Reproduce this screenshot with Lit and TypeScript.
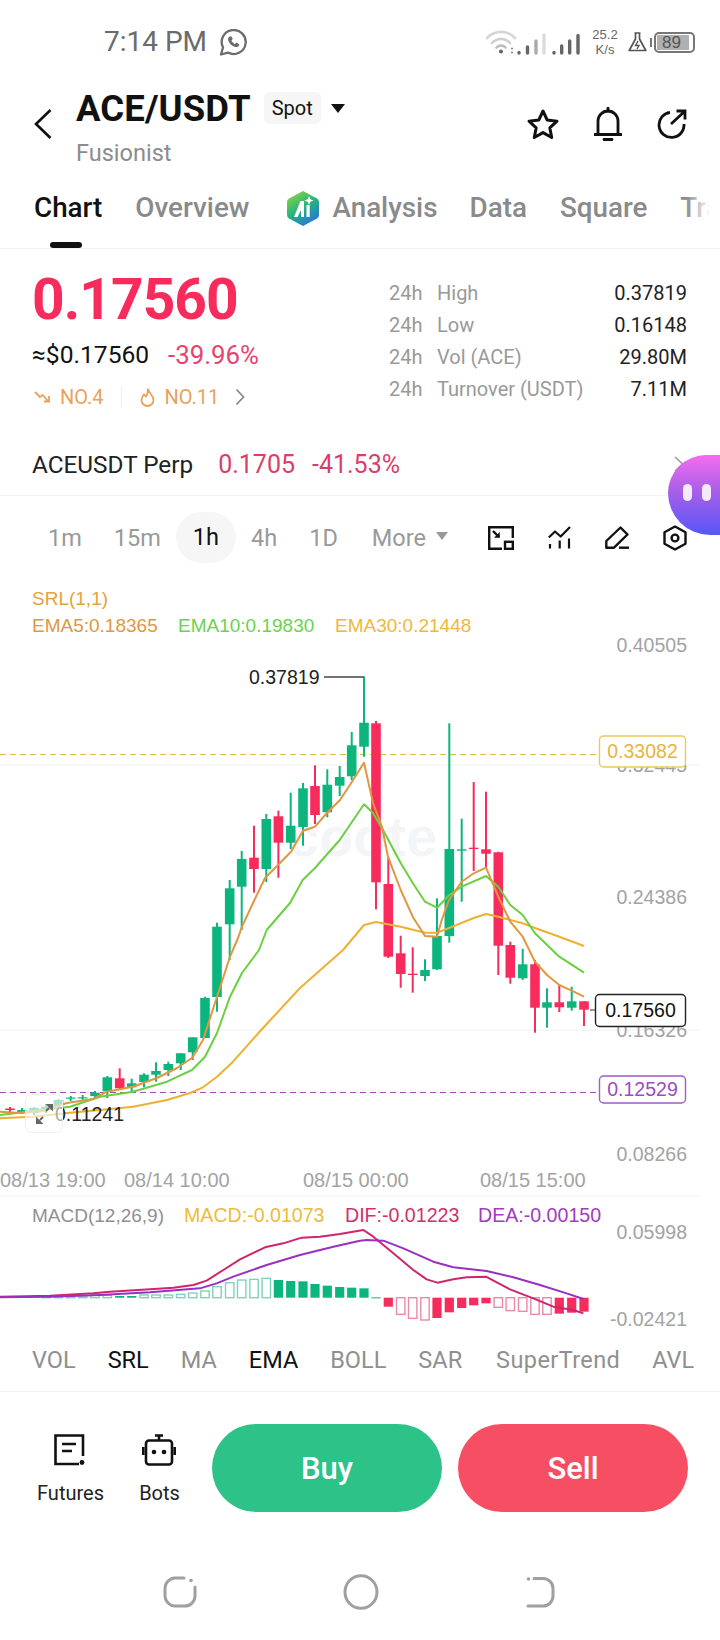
import { LitElement, html, svg, css } from 'lit';
import { customElement } from 'lit/decorators.js';

type Candle = [x: number, high: number, low: number, top: number, bottom: number, up: boolean];

const UP = '#0db57e';
const DOWN = '#f72b5c';

const CANDLES: Candle[] = [
  [10, 1107, 1112, 1108.5, 1110, false],
  [22, 1108, 1114, 1110, 1112, true],
  [34, 1107, 1115, 1108, 1113, true],
  [46, 1104, 1113, 1106.7, 1110, true],
  [58.5, 1099, 1108, 1100, 1106, true],
  [70.7, 1096, 1101, 1097.5, 1098.7, true],
  [82.7, 1095, 1100, 1097.3, 1098.5, true],
  [95, 1091, 1098, 1092.7, 1096, true],
  [107.3, 1076, 1098, 1077.3, 1091.3, true],
  [119.7, 1068.3, 1090, 1078.3, 1088.3, false],
  [131.7, 1078.7, 1091.7, 1083.3, 1087.3, true],
  [144, 1073.3, 1087.3, 1074.7, 1082, true],
  [156, 1062.3, 1081.7, 1071, 1074.7, true],
  [168.3, 1061.7, 1076, 1064, 1070, true],
  [180.7, 1053.3, 1070, 1053.3, 1063.3, true],
  [192.7, 1037.3, 1060, 1037.3, 1052.3, true],
  [205, 996.7, 1038, 998, 1038, true],
  [217, 922.7, 1011.7, 926.7, 997, true],
  [229.7, 880, 960, 888.3, 924.3, true],
  [241.7, 851, 930, 859, 886.7, true],
  [254, 825.7, 892.7, 857.7, 869, false],
  [266.3, 814, 882, 819, 869, true],
  [278.4, 810.7, 877.7, 816.3, 842.7, false],
  [290.7, 792.7, 849, 825.7, 842.7, true],
  [303, 783, 845.7, 788.3, 827, true],
  [315, 765.3, 824, 786, 815, false],
  [327.3, 769.3, 817.3, 784.7, 812.3, true],
  [339.7, 766, 796, 777, 785.7, true],
  [351.7, 732, 780, 745.3, 776.3, true],
  [364, 676.7, 756.7, 722.7, 746.7, true],
  [376, 721, 909.3, 723.3, 882.3, false],
  [388.3, 858, 958, 884, 956.7, false],
  [400.7, 935.7, 987.7, 953.3, 974, false],
  [412.7, 947.3, 992.7, 973.7, 975, false],
  [425, 959.3, 981, 970, 976, true],
  [437, 898.3, 970, 936, 969.3, true],
  [449.3, 723.3, 942.7, 849, 936, true],
  [461.7, 818.7, 901.7, 849.3, 850.7, true],
  [473.7, 782, 871, 847.7, 849, false],
  [486, 791.7, 868, 849.3, 853.7, false],
  [498.3, 851.7, 975, 852.3, 945.7, false],
  [510.3, 941.7, 983.7, 945, 977.7, false],
  [522.7, 948.7, 980, 964.3, 978.3, true],
  [535, 960, 1032.7, 964.3, 1007.7, false],
  [547, 988.3, 1027.7, 1002.3, 1007.7, true],
  [559.3, 985, 1012, 1002.3, 1007.3, false],
  [571.7, 986.7, 1010.7, 1001.3, 1007.7, true],
  [584, 1001.3, 1026, 1001.3, 1009.7, false],
];

const EMA5 =
  '0,1111.7 20,1113 43,1111 67,1103 93,1099 107,1091.7 133,1086.7 157,1078 177,1068 192,1058 203,1040 217,996.7 230,956.7 238,938 242,926.7 253,903 265,878 278,865 291,851.7 303,830.7 315,826.7 327,813 340,800 352,781.7 364,762.7 373,803 382,827 388,856.7 400.7,890 412.7,916.7 425,936 437,936.7 441.7,920 449,900 461.7,881.7 473.7,873.3 486,867.7 498.3,896.7 510.3,921.7 522.7,936.7 535,961.7 547,975 559.3,985 571.7,990.7 584,996.7';
const EMA10 =
  '0,1115 33,1111 70,1106.7 100,1096.7 133,1091.7 167,1081.7 192,1070 205,1056.7 217,1033 230,996.7 242,973 259,950 266.7,930 290,903 302.7,880 315,868 339.7,840 364,804.3 373,813 383,830 400.7,863 412.7,883 425,901.7 437,907.7 449.3,895 461.7,886.7 486,876 498.3,886.7 510.3,905 522.7,915 535,933.3 559.3,956.7 584,972.7';
const EMA30 =
  '0,1118.3 33,1116.7 67,1113 100,1110 133,1106.7 167,1100 190,1093 203,1087.3 217,1076.7 233,1061.7 263,1028 300,988 343,950 364,925 376,922 400.7,926.7 425,932.7 437,932.7 449,928 473.7,918 486,914 498.3,916.7 522.7,923.3 535,928 559.3,936.7 584,946';

// MACD lines and histogram, measured from a 3x crop: x and top are in crop units, y0 = 1190
const scalePts = (pts: number[][]) => pts.map(([x, y]) => `${x / 3},${1190 + y / 3}`).join(' ');
const DIF = scalePts([
  [0, 320], [150, 317], [280, 310], [330, 305], [450, 298], [520, 293], [580, 285], [620, 272], [670, 240], [720, 208],
  [795, 172], [850, 160], [905, 143], [960, 140], [1020, 132], [1090, 120], [1120, 140], [1180, 190], [1240, 240],
  [1280, 268], [1312, 278], [1360, 268], [1400, 262], [1458, 260], [1530, 298], [1600, 325], [1660, 350], [1720, 360], [1750, 370],
]);
const DEA = scalePts([
  [0, 322], [150, 320], [300, 315], [450, 307], [600, 295], [650, 280], [700, 260], [800, 225], [900, 195], [1000, 170],
  [1080, 152], [1100, 150], [1150, 152], [1210, 175], [1300, 215], [1360, 232], [1460, 243], [1540, 262], [1620, 285],
  [1700, 310], [1750, 327],
]);

type Bar = [x: number, end: number, filled: boolean];
const BASE = 1297.7;
const BARS: Bar[] = [
  [46, 320, false], [58.5, 319, false], [70.7, 318, false], [82.7, 318, false], [95, 316, false], [107.3, 316, false],
  [119.7, 318, true], [131.7, 318, true], [144, 315, false], [156, 315, false], [168.3, 315, false], [180.7, 313, false],
  [192.7, 309, false], [205, 303, false], [217, 290, false], [229.7, 278, false], [241.7, 270, false], [254, 268, false],
  [266.3, 265, false], [278.4, 270, true], [290.7, 273, true], [303, 274, true], [315, 282, true], [327.3, 287, true],
  [339.7, 291, true], [351.7, 293, true], [364, 295, true], [376, 322, true],
  [388.3, 350, true], [400.7, 373, false], [412.7, 385, false], [425, 390, false], [437, 384, true], [449.3, 367, true],
  [461.7, 354, true], [473.7, 346, true], [486, 340, true], [498.3, 352, false], [510.3, 362, false], [522.7, 364, false],
  [535, 373, false], [547, 373, false], [559.3, 371, true], [571.7, 368, true], [584, 365, true],
];

const gridY = [765, 1030, 1196];
const axis: [string, number][] = [
  ['0.40505', 651.5],
  ['0.32445', 772],
  ['0.24386', 904],
  ['0.16326', 1037],
  ['0.08266', 1161],
  ['0.05998', 1239],
  ['-0.02421', 1326],
];
const dates: [string, number][] = [
  ['08/13 19:00', 0],
  ['08/14 10:00', 124],
  ['08/15 00:00', 303],
  ['08/15 15:00', 480],
];

@customElement('price-chart')
export class PriceChart extends LitElement {
  static override styles = css`
    :host {
      display: block;
      height: 758px;
    }
    svg {
      display: block;
      width: 720px;
      height: 758px;
    }
    text {
      font-family: 'Liberation Sans', Arial, sans-serif;
      font-size: 19.5px;
    }
    .axis {
      fill: #a3a3a3;
      text-anchor: end;
    }
    .date {
      fill: #a3a3a3;
      font-size: 20px;
    }
    .legend {
      font-size: 19px;
    }
    .legend.wide {
      font-size: 19.6px;
    }
    .mark {
      fill: #222;
    }
    .wm {
      fill: #f3f5f6;
      font-size: 56px;
      font-weight: 700;
    }
    .tag {
      fill: #fff;
      stroke-width: 1.4;
    }
    .line {
      fill: none;
      stroke-width: 2;
      stroke-linejoin: round;
    }
  `;

  override render() {
    return html`<svg viewBox="0 570 720 758">
      ${gridY.map((y) => svg`<line x1="0" x2="700" y1=${y} y2=${y} stroke="#f0f0f0" />`)}
      <text class="wm" x="288" y="856">coote</text>

      ${axis.map(([t, y]) => svg`<text class="axis" x="687" y=${y}>${t}</text>`)}
      ${dates.map(([t, x]) => svg`<text class="date" x=${x} y="1187">${t}</text>`)}

      <text class="legend" x="32" y="605" fill="#e8a03c">SRL(1,1)</text>
      <text class="legend" x="32" y="632" fill="#e0973f">EMA5:0.18365</text>
      <text class="legend" x="178" y="632" fill="#6bd34a">EMA10:0.19830</text>
      <text class="legend" x="335" y="632" fill="#eeb83a">EMA30:0.21448</text>

      <line x1="0" x2="600" y1="754.5" y2="754.5" stroke="#d9c04e" stroke-width="1.2" stroke-dasharray="6 4" />
      <line x1="0" x2="600" y1="1092.5" y2="1092.5" stroke="#a34fb5" stroke-width="1.2" stroke-dasharray="6 4" />

      ${CANDLES.map(([x, high, low, top, bottom, up]) => {
        const c = up ? UP : DOWN;
        return svg`<rect x=${x - 1} y=${high} width="2" height=${low - high} fill=${c} />
          <rect x=${x - 4.8} y=${top} width="9.6" height=${bottom - top} fill=${c} />`;
      })}

      <polyline class="line" points=${EMA30} stroke="#eeb030" />
      <polyline class="line" points=${EMA10} stroke="#6bcf3f" />
      <polyline class="line" points=${EMA5} stroke="#e0973f" />

      <text class="mark" x="249" y="683.5">0.37819</text>
      <line x1="324" x2="364" y1="677" y2="677" stroke="#444" stroke-width="1.4" />
      <text class="mark" x="55" y="1121">0.11241</text>

      <rect x="25.5" y="1094.5" width="37" height="38" rx="6" fill="#fff" fill-opacity="0.62" stroke="#eeeeee" />
      <path d="M36 1124 v-7.5 l7.5 7.5 z M53 1104 v7.5 l-7.5 -7.5 z" fill="#666" />
      <path d="M40 1120 l3 -3 M49 1108 l-3 3" stroke="#666" stroke-width="2" />

      <rect class="tag" x="599.5" y="736" width="86" height="31" rx="4" stroke="#f0c658" />
      <text x="642.5" y="758" text-anchor="middle" fill="#e9b43c">0.33082</text>
      <line x1="590" x2="595" y1="1010" y2="1010" stroke="#333" />
      <rect class="tag" x="595.5" y="994.5" width="90" height="32" rx="4" stroke="#222" />
      <text x="640.5" y="1017" text-anchor="middle" fill="#111">0.17560</text>
      <rect class="tag" x="599.5" y="1076" width="86" height="27" rx="4" stroke="#a35bc5" />
      <text x="642.5" y="1096" text-anchor="middle" fill="#9c4dbf">0.12529</text>

      <text class="legend" x="32" y="1222" fill="#909090">MACD(12,26,9)</text>
      <text class="legend wide" x="184" y="1222" fill="#ecbb3c">MACD:-0.01073</text>
      <text class="legend wide" x="345" y="1222" fill="#d0306f">DIF:-0.01223</text>
      <text class="legend wide" x="478" y="1222" fill="#a03cc0">DEA:-0.00150</text>

      ${BARS.map(([x, end, filled]) => {
        const y = 1190 + end / 3;
        const rising = x < 380;
        const c = rising ? UP : DOWN;
        const top = Math.min(y, BASE);
        const h = Math.max(Math.abs(y - BASE), 1);
        return filled
          ? svg`<rect x=${x - 4.6} y=${top} width="9.2" height=${h} fill=${c} />`
          : svg`<rect x=${x - 4.2} y=${top} width="8.4" height=${h} fill="#fff" stroke=${rising ? '#7dd3bd' : '#e88ba3'} stroke-width="1.4" />`;
      })}

      <polyline class="line" points=${DIF} stroke="#d0246e" />
      <polyline class="line" points=${DEA} stroke="#9a2fc0" />
    </svg>`;
  }
}

@customElement('app-root')
export class AppRoot extends LitElement {
  static override styles = css`
    :host {
      display: block;
      position: relative;
      width: 720px;
      height: 1640px;
      overflow: hidden;
      background: #fff;
      font-family: Roboto, 'Liberation Sans', sans-serif;
      color: #111;
    }

    svg {
      display: block;
      flex-shrink: 0;
    }

    /* status bar */
    .status {
      height: 84px;
      display: flex;
      align-items: center;
      padding: 0 25px 0 104px;
      color: #6b6b6b;
    }
    .clock {
      font-size: 28px;
      line-height: 30px;
      margin-right: 12px;
    }
    .status-right {
      margin-left: auto;
      display: flex;
      align-items: center;
    }
    .signal {
      margin-right: 6px;
    }
    .speed {
      width: 36px;
      margin: 0 5px 0 0;
      text-align: center;
      font: 13px/15px 'Liberation Sans', sans-serif;
      color: #666;
    }
    .battery {
      position: relative;
      width: 41px;
      height: 21px;
      box-sizing: border-box;
      border: 2px solid #777;
      border-radius: 5px;
      margin-left: 7px;
      padding: 1px;
    }
    .battery span {
      display: block;
      height: 100%;
      width: 92%;
      padding-left: 5px;
      box-sizing: border-box;
      background: #b0b0b0;
      font: 17px/15px 'Liberation Sans', sans-serif;
      color: #555;
    }
    .battery::before {
      content: '';
      position: absolute;
      left: -6px;
      top: 4px;
      width: 2px;
      height: 9px;
      background: #777;
    }

    /* pair header */
    .header {
      height: 86px;
      display: flex;
      padding: 0 33px 0 34px;
      box-sizing: border-box;
    }
    .back {
      margin: 25px 24px 0 0;
    }
    .pair {
      display: flex;
      align-items: center;
      height: 40px;
      margin-top: 4px;
    }
    .symbol {
      font-size: 36.5px;
      font-weight: 700;
      letter-spacing: 0.1px;
    }
    .spot {
      margin-left: 13px;
      width: 57px;
      height: 32px;
      line-height: 32px;
      text-align: center;
      background: #f6f6f6;
      border-radius: 5px;
      font-size: 20px;
    }
    .caret {
      margin-left: 10px;
      width: 0;
      height: 0;
      border-left: 7px solid transparent;
      border-right: 7px solid transparent;
      border-top: 9px solid #111;
    }
    .sub {
      margin-top: 12px;
      font-size: 23.5px;
      line-height: 26px;
      color: #8c8c8c;
    }
    .header-icons {
      margin: 23px 0 0 auto;
      display: flex;
      gap: 33px;
      align-items: center;
      height: 34px;
    }

    /* tabs */
    .tabs {
      position: relative;
      height: 79px;
      box-sizing: border-box;
      border-bottom: 1px solid #f0f0f0;
      display: flex;
      align-items: flex-start;
      gap: 33px;
      padding: 19px 0 0 34px;
      overflow: hidden;
      font-size: 27.8px;
      font-weight: 500;
      color: #8a8a8a;
      white-space: nowrap;
    }
    .tab {
      line-height: 38px;
    }
    .tab.active {
      color: #111;
      position: relative;
    }
    .tab.active::after {
      content: '';
      position: absolute;
      left: 16px;
      top: 53px;
      width: 32px;
      height: 6px;
      border-radius: 3px;
      background: #111;
    }
    .tab.ai {
      display: flex;
      align-items: center;
      gap: 12px;
      margin: 0 -1px 0 4px;
    }
    .fade {
      position: absolute;
      right: 0;
      top: 0;
      bottom: 0;
      width: 34px;
      background: linear-gradient(90deg, rgba(255, 255, 255, 0), #fff 70%);
    }

    /* ticker */
    .ticker {
      height: 186px;
      display: flex;
      justify-content: space-between;
      padding: 0 33px 0 32px;
      box-sizing: border-box;
    }
    .price {
      margin-top: 18px;
      font-size: 57px;
      line-height: 66px;
      font-weight: 700;
      letter-spacing: -1px;
      color: #f72b5c;
    }
    .fiat {
      margin-top: 7px;
      display: flex;
      align-items: center;
      gap: 19px;
      font-size: 24.6px;
      line-height: 30px;
    }
    .fiat b {
      font-size: 25.8px;
      font-weight: 400;
      color: #e8436f;
    }
    .rank {
      margin-top: 12px;
      display: flex;
      align-items: center;
      font-size: 20px;
      line-height: 30px;
      color: #e9a25c;
    }
    .rank i {
      width: 1px;
      height: 22px;
      background: #f5ece2;
      margin: 0 18px 0 17px;
    }
    .stats {
      width: 298px;
      padding-top: 28px;
    }
    .stat {
      display: flex;
      height: 32px;
      line-height: 32px;
      font-size: 20px;
      color: #999;
    }
    .stat span:first-child {
      width: 48px;
    }
    .stat b {
      margin-left: auto;
      font-weight: 400;
      color: #222;
    }

    /* perpetual row */
    .perp {
      height: 61px;
      box-sizing: border-box;
      border-bottom: 1px solid #f2f2f2;
      display: flex;
      padding: 0 0 2px 32px;
      align-items: center;
      font-size: 24.3px;
      color: #222;
    }
    .perp b {
      font-size: 25px;
      font-weight: 400;
      color: #d93f69;
    }
    .perp .v1 {
      margin-left: 25px;
    }
    .perp .v2 {
      margin-left: 17px;
    }

    /* timeframes */
    .frames {
      height: 74px;
      display: flex;
      align-items: center;
      padding: 9px 33px 0 48px;
      box-sizing: border-box;
      gap: 32px;
      font-size: 23.5px;
      color: #999;
    }
    .frame.active {
      color: #111;
      padding: 0 17px;
      margin: 0 -17px;
      height: 51px;
      line-height: 51px;
      background: #f6f6f6;
      border-radius: 26px;
    }
    .more {
      margin-left: 2px;
      display: flex;
      align-items: center;
      gap: 10px;
    }
    .more span {
      width: 0;
      height: 0;
      border-left: 6px solid transparent;
      border-right: 6px solid transparent;
      border-top: 8px solid #999;
      margin-top: -4px;
    }
    .tools {
      margin-left: auto;
      display: flex;
      align-items: center;
      gap: 34px;
    }

    /* indicator strip */
    .indicators {
      height: 64px;
      box-sizing: border-box;
      border-bottom: 1px solid #f2f2f2;
      display: flex;
      align-items: center;
      gap: 32px;
      padding: 0 0 0 32px;
      white-space: nowrap;
      overflow: hidden;
      font-size: 23.5px;
      color: #8f8f8f;
    }
    .indicators .on {
      color: #111;
    }
    .indicators span:nth-child(7) {
      letter-spacing: 0.4px;
      margin-left: 2px;
    }

    /* actions */
    .actions {
      height: 120px;
      box-sizing: border-box;
      padding: 32px 32px 0 0;
      display: flex;
      align-items: flex-start;
    }
    .shortcut {
      display: flex;
      flex-direction: column;
      align-items: center;
      margin-top: 10px;
      font-size: 20px;
      color: #222;
      gap: 15px;
    }
    .shortcut svg {
      margin-right: 2px;
    }
    .shortcut.futures {
      width: 67px;
      margin-left: 37px;
    }
    .shortcut.bots {
      width: 39px;
      margin-left: 36px;
    }
    .btn {
      height: 88px;
      width: 230px;
      border-radius: 44px;
      text-align: center;
      line-height: 90px;
      font-size: 31px;
      font-weight: 500;
      color: #fff;
    }
    .buy {
      margin-left: 33px;
      background: #2dc287;
    }
    .sell {
      margin-left: 16px;
      background: #f64f63;
    }

    /* system navigation */
    .nav {
      height: 64px;
      margin-top: 64px;
      display: flex;
      padding-left: 163px;
    }
    .nav svg:nth-child(2) {
      margin-left: 146px;
    }
    .nav svg:nth-child(3) {
      margin-left: 147px;
    }

    /* floating assistant */
    .assistant {
      position: absolute;
      left: 668px;
      top: 455px;
      width: 70px;
      height: 80px;
      border-radius: 38px 0 0 42px;
      background: linear-gradient(180deg, #f56df0 0%, #a85fe8 45%, #5756f8 100%);
    }
    .assistant span {
      position: absolute;
      top: 29px;
      width: 9px;
      height: 17px;
      border-radius: 5px;
      background: #f6e9fc;
    }
    .assistant span:nth-child(1) {
      left: 15px;
    }
    .assistant span:nth-child(2) {
      left: 34px;
    }
    .perp-chevron {
      position: absolute;
      left: 674px;
      top: 456px;
    }
  `;

  private ranks() {
    return html`<div class="rank">
      <svg width="18" height="14" viewBox="0 0 18 14" style="margin:0 8px 0 2px" fill="none" stroke="#e9a25c" stroke-width="1.8">
        <path d="M1 2 L6 7 L8.5 5 L14 11 M15 6 V11.5 H10" />
      </svg>
      NO.4
      <i></i>
      <svg width="15" height="21" viewBox="0 0 15 21" style="margin-right:10px" fill="none" stroke="#e9a25c" stroke-width="1.8">
        <path d="M8 1.5 C8.5 6 13.5 8 13.5 13 A6 6 0 0 1 1.5 13 C1.5 10.5 3 9 4 7.5 C5 9 5.5 9.5 6 9.5 C7.5 7.5 8 4.5 8 1.5 Z" />
      </svg>
      NO.11
      <svg width="10" height="18" viewBox="0 0 10 18" style="margin-left:16px" fill="none" stroke="#888" stroke-width="1.8">
        <path d="M1.5 1.5 L8.5 9 L1.5 16.5" />
      </svg>
    </div>`;
  }

  override render() {
    const stats = [
      ['High', '0.37819'],
      ['Low', '0.16148'],
      ['Vol (ACE)', '29.80M'],
      ['Turnover (USDT)', '7.11M'],
    ];
    const indicators = [
      ['VOL', false],
      ['SRL', true],
      ['MA', false],
      ['EMA', true],
      ['BOLL', false],
      ['SAR', false],
      ['SuperTrend', false],
      ['AVL', false],
    ] as const;

    return html`
      <div class="status">
        <span class="clock">7:14 PM</span>
        <svg width="29" height="27" viewBox="1 0 27 27" fill="none" stroke="#6b6b6b" stroke-width="2.3">
          <path d="M2 25.5 L4 18.5 A12 12 0 1 1 9 23.6 Z" stroke-linejoin="round" />
          <path
            d="M10.6 7.6 C9.3 8.4 8.8 9.8 9.3 11.4 C10.4 14.6 13 17 16.2 18 C17.8 18.4 19.2 17.8 20 16.4 L20.4 15.4 L17.4 13.6 L16 15 C14.6 14.4 13 12.8 12.4 11.4 L13.8 10 L12.2 7.2 Z"
            fill="#6b6b6b"
            stroke="none"
          />
        </svg>
        <div class="status-right">
          <svg class="signal" width="98" height="26" viewBox="0 0 98 26" fill="none" stroke-linecap="round">
            <g transform="translate(3 0)">
              <path d="M1 9 A19 19 0 0 1 29 9" stroke="#d6d6d6" stroke-width="2.6" />
              <path d="M6 14 A12 12 0 0 1 24 14" stroke="#cfcfcf" stroke-width="2.6" />
              <path d="M10.5 18.5 A6 6 0 0 1 19.5 18.5" stroke="#bdbdbd" stroke-width="2.6" />
              <circle cx="15" cy="22.5" r="2" fill="#666" />
            </g>
            <circle cx="29" cy="19.5" r="1.1" fill="#888" />
            <circle cx="29" cy="23.5" r="1.1" fill="#888" />
            <g stroke="#666" stroke-width="3.4">
              <path d="M36 23.5 v.5 M44.5 18 v6" />
              <path d="M53 12 v12" stroke="#aaa" />
              <path d="M61 6 v18" stroke="#dcdcdc" />
              <path d="M71 23.5 v.5 M78.7 17 v7 M86.7 12 v12 M95 6.5 v17.5" />
            </g>
          </svg>
          <div class="speed">25.2<br />K/s</div>
          <svg width="19" height="20" viewBox="0 0 19 20" fill="none" stroke="#555" stroke-width="1.7">
            <path d="M6.5 1 H12.5 M7.5 1 V7 L1.2 18.5 H17.8 L11.5 7 V1" stroke-linejoin="round" />
            <path d="M10 9 L7.5 13.5 H11 L9 17" stroke-width="1.4" />
          </svg>
          <div class="battery"><span>89</span></div>
        </div>
      </div>

      <div class="header">
        <svg class="back" width="18" height="30" viewBox="0 0 18 30" fill="none" stroke="#111" stroke-width="2.6">
          <path d="M16.5 1 L2 15 L16.5 29" />
        </svg>
        <div>
          <div class="pair">
            <span class="symbol">ACE/USDT</span>
            <span class="spot">Spot</span>
            <span class="caret"></span>
          </div>
          <div class="sub">Fusionist</div>
        </div>
        <div class="header-icons">
          <svg width="34" height="32" viewBox="0 0 34 32" fill="none" stroke="#111" stroke-width="3" stroke-linejoin="round">
            <path d="M17 3 L21.2 12 L31 13.2 L23.8 19.8 L25.7 29.5 L17 24.6 L8.3 29.5 L10.2 19.8 L3 13.2 L12.8 12 Z" />
          </svg>
          <svg width="30" height="34" viewBox="0 0 30 34" fill="none" stroke="#111" stroke-width="2.8">
            <path d="M1 27.5 H29 M5 27.5 V14 A10 10 0 0 1 25 14 V27.5" />
            <path d="M15 1 V4 M11 32.5 H19" stroke-linecap="round" />
          </svg>
          <svg width="31" height="30" viewBox="0 0 31 30" fill="none" stroke="#111" stroke-width="2.8">
            <path d="M14 3.5 A12.5 12.5 0 1 0 28 15" />
            <path d="M15 15 L28.5 2.5 M20.5 2 H29 V10.5" />
          </svg>
        </div>
      </div>

      <div class="tabs">
        <span class="tab active">Chart</span>
        <span class="tab">Overview</span>
        <span class="tab ai">
          <svg width="34" height="37" viewBox="0 0 34 37">
            <defs>
              <linearGradient id="ai" x1="0.15" y1="0" x2="0.75" y2="1">
                <stop offset="0" stop-color="#8fd443" />
                <stop offset="0.5" stop-color="#25b47c" />
                <stop offset="1" stop-color="#2a6ee6" />
              </linearGradient>
            </defs>
            <path d="M17 1 L31 8.5 Q33 9.6 33 12 V25 Q33 27.4 31 28.5 L17 36 L3 28.5 Q1 27.4 1 25 V12 Q1 9.6 3 8.5 Z" fill="url(#ai)" />
            <path d="M8 27 L14.5 11 H18 L18 27 H15 V20 L11.5 27 Z" fill="#fff" />
            <rect x="20.5" y="15" width="3.2" height="12" fill="#fff" />
            <path d="M23 6 L24.3 9.2 L27.5 10.5 L24.3 11.8 L23 15 L21.7 11.8 L18.5 10.5 L21.7 9.2 Z" fill="#fff" />
          </svg>
          Analysis
        </span>
        <span class="tab">Data</span>
        <span class="tab">Square</span>
        <span class="tab">Trade</span>
        <div class="fade"></div>
      </div>

      <div class="ticker">
        <div>
          <div class="price">0.17560</div>
          <div class="fiat"><span>≈$0.17560</span><b>-39.96%</b></div>
          ${this.ranks()}
        </div>
        <div class="stats">
          ${stats.map(
            ([k, v]) => html`<div class="stat"><span>24h</span><span>${k}</span><b>${v}</b></div>`
          )}
        </div>
      </div>

      <div class="perp">
        <span>ACEUSDT Perp</span>
        <b class="v1">0.1705</b>
        <b class="v2">-41.53%</b>
      </div>

      <div class="frames">
        <span class="frame">1m</span>
        <span class="frame">15m</span>
        <span class="frame active">1h</span>
        <span class="frame">4h</span>
        <span class="frame">1D</span>
        <span class="frame more">More<span></span></span>
        <div class="tools">
          <svg width="26" height="24" viewBox="0 0 26 24" fill="none" stroke="#111" stroke-width="2.4">
            <path d="M14 22.8 H1.2 V1.2 H24.8 V12" />
            <rect x="17" y="15.8" width="7.8" height="7" />
            <path d="M5 5 L11 11" />
            <path d="M11.8 6 V11.8 H6 Z" fill="#111" stroke="none" />
          </svg>
          <svg width="23" height="23" viewBox="0 0 23 23" fill="none" stroke="#111" stroke-width="2.2">
            <path d="M0.8 11.5 L7 5.5 L12.7 10.5 L22 1" stroke-linejoin="round" />
            <path d="M2 18 V22.5 M11.7 14.5 V22.5 M21 12.5 V22.5" />
          </svg>
          <svg width="24" height="23" viewBox="0 0 24 23" fill="none" stroke="#111" stroke-width="2.4" stroke-linejoin="round">
            <path d="M1.3 21.7 V15 L15.5 1.5 L22.5 8.5 L9 21.7 Z" />
            <path d="M14 21.7 H24" />
          </svg>
          <svg width="24" height="26" viewBox="0 0 24 26" fill="none" stroke="#111" stroke-width="2.4" stroke-linejoin="round">
            <path d="M12 1.5 L22.5 7.2 V18.8 L12 24.5 L1.5 18.8 V7.2 Z" />
            <circle cx="12" cy="13" r="3.4" />
          </svg>
        </div>
      </div>

      <price-chart></price-chart>

      <div class="indicators">
        ${indicators.map(([t, on]) => html`<span class=${on ? 'on' : ''}>${t}</span>`)}
      </div>

      <div class="actions">
        <div class="shortcut futures">
          <svg width="31" height="32" viewBox="0 0 31 32" fill="none" stroke="#111" stroke-width="2.6">
            <path d="M29 22 V1.5 H1.5 V30 H25" />
            <path d="M8 10 H22 M8 17 H18" />
            <circle cx="28" cy="28.5" r="2.4" fill="#111" stroke="none" />
          </svg>
          Futures
        </div>
        <div class="shortcut bots">
          <svg width="34" height="32" viewBox="0 0 34 32" fill="none" stroke="#111" stroke-width="2.6">
            <rect x="4" y="6.5" width="26" height="24" rx="3" />
            <path d="M13 1.5 H21 M17 1.5 V6" />
            <path d="M1.3 13 V21 M32.7 13 V21" />
            <circle cx="12" cy="18" r="2.3" fill="#111" stroke="none" />
            <circle cx="22" cy="18" r="2.3" fill="#111" stroke="none" />
          </svg>
          Bots
        </div>
        <div class="btn buy">Buy</div>
        <div class="btn sell">Sell</div>
      </div>

      <div class="nav">
        <svg width="34" height="32" viewBox="0 0 34 32" fill="none" stroke="#a0a0a0" stroke-width="3" stroke-linecap="round">
          <path d="M21 2 H12 A10.5 10.5 0 0 0 2 12.5 V20 A10.5 10.5 0 0 0 12 30 H22 A10 10 0 0 0 32 20 V11" />
          <circle cx="28" cy="4.5" r="1.8" fill="#a0a0a0" stroke="none" />
        </svg>
        <svg width="36" height="36" viewBox="0 0 36 36" fill="none" stroke="#a0a0a0" stroke-width="3" style="margin-top:-2px">
          <ellipse cx="18" cy="18" rx="16" ry="16.3" />
        </svg>
        <svg width="30" height="32" viewBox="0 0 30 32" fill="none" stroke="#a0a0a0" stroke-width="3" stroke-linecap="round">
          <path d="M8 2.5 H17 A10 10 0 0 1 27 12.5 V20 A10 10 0 0 1 17 30 H2" />
          <circle cx="2.5" cy="3" r="1.8" fill="#a0a0a0" stroke="none" />
        </svg>
      </div>

      <svg class="perp-chevron" width="10" height="16" viewBox="0 0 10 16" fill="none" stroke="#999" stroke-width="1.6">
        <path d="M1 1 L8.5 8 L1 15" />
      </svg>
      <div class="assistant"><span></span><span></span></div>
    `;
  }
}
